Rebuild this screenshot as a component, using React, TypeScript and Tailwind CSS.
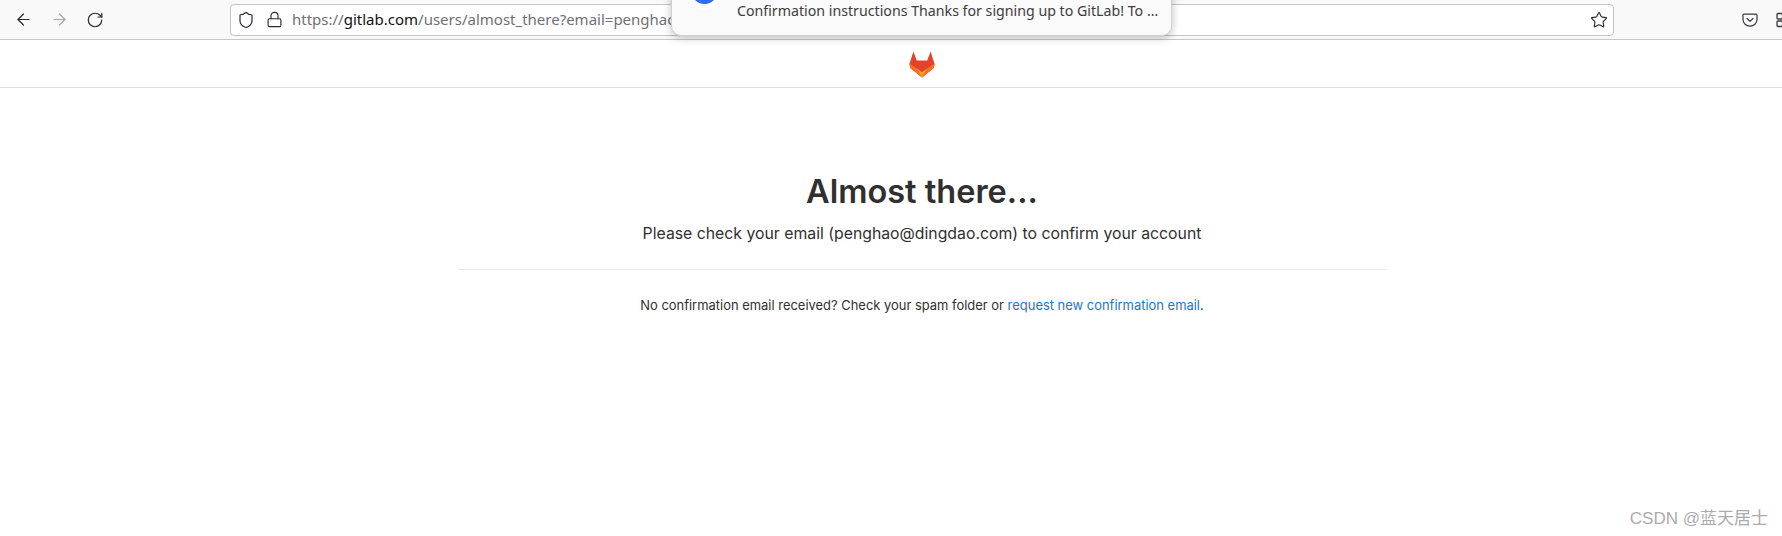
import React from "react";
import { ArrowLeft, ArrowRight, Lock, RotateCw, Shield, Star } from "lucide-react";

const GitlabLogo = () => (
  <svg width="26" height="27" viewBox="0 0 26 27" className="block">
    <path d="M4.4 0.5 L0.4 13 L1.4 17 L13 26.5 L24.6 17 L25.6 13 L21.6 0.5 L18.2 9.5 L7.8 9.5 Z" fill="#e24329" />
    <path d="M0.4 12.5 L8 17.6 L13 26.5 L1.2 17 Z" fill="#fc6d26" />
    <path d="M25.6 12.5 L18 17.6 L13 26.5 L24.8 17 Z" fill="#fc6d26" />
    <path d="M8 17.6 L13 21.2 L18 17.6 L13 26.5 Z" fill="#fca326" />
  </svg>
);

const PocketIcon = () => (
  <svg width="16" height="16" viewBox="0 0 16 16" fill="none" stroke="#3a3a40" strokeWidth="1.2" className="block">
    <path d="M2 2.2h12a1 1 0 0 1 1 1v4.3c0 3.8-3.1 6.6-7 6.6s-7-2.8-7-6.6V3.2a1 1 0 0 1 1-1z" />
    <path d="M5 6.5 8 9.4l3-2.9" strokeLinecap="round" strokeLinejoin="round" />
  </svg>
);

const ExtensionsIcon = () => (
  <svg width="16" height="16" viewBox="0 0 16 16" fill="none" stroke="#3a3a40" strokeWidth="1.3" className="block shrink-0">
    <rect x="1" y="1.5" width="5.5" height="5.5" rx="1" />
    <rect x="1" y="9" width="5.5" height="5.5" rx="1" />
    <rect x="9" y="9" width="5.5" height="5.5" rx="1" />
  </svg>
);

const App = () => {
  return (
    <div className="relative h-[536px] w-[1782px] overflow-hidden bg-white font-['Inter',sans-serif] text-[#303030]">
      {/* browser toolbar */}
      <div className="flex h-10 items-center border-b border-[#c8c8ca] bg-[#f9f9f9]">
        <div className="flex w-[230px] items-center gap-[17px] pl-[14px] text-[#2b2a33]">
          <ArrowLeft size={19} strokeWidth={1.5} />
          <ArrowRight size={19} strokeWidth={1.5} className="text-[#a5a5ab]" />
          <RotateCw size={18} strokeWidth={1.6} />
        </div>
        <div className="flex h-8 w-[1384px] items-center rounded border border-[#c4c4c8] bg-white pl-[6px] pr-[5px]">
          <Shield size={18} strokeWidth={1.6} className="text-[#2b2a33]" />
          <Lock size={17} strokeWidth={1.6} className="ml-[11px] text-[#2b2a33]" />
          <div className="ml-[9px] flex-1 overflow-hidden whitespace-nowrap font-['Noto_Sans',sans-serif] text-[15px] text-[#6f6f76]">
            https://<span className="text-[#111]">gitlab.com</span>/users/almost_there?email=penghao
          </div>
          <Star size={18} strokeWidth={1.5} className="text-[#2b2a33]" />
        </div>
        <div className="ml-auto flex items-center gap-[18px]">
          <PocketIcon />
          <div className="w-[6px] overflow-hidden">
            <ExtensionsIcon />
          </div>
        </div>
      </div>

      {/* page header */}
      <div className="flex h-[48px] items-center justify-center border-b border-[#dcdcde] pl-[62px] pt-px">
        <GitlabLogo />
      </div>

      {/* confirmation message */}
      <div className="flex flex-col items-center pl-[62px] pt-[80px]">
        <div className="flex w-[929px] flex-col items-center">
          <h1 className="text-[32.5px] leading-[48px] font-semibold text-[#303030]">Almost there...</h1>
          <p className="mt-[6px] text-[15.8px] leading-6 text-[#303030]">
            Please check your email (penghao@dingdao.com) to confirm your account
          </p>
          <div className="mt-[23px] w-full border-t border-[#e8e8ea]" />
          <p className="mt-[26px] text-[12.95px] leading-[18px] text-[#303030]">
            No confirmation email received? Check your spam folder or{" "}
            <a className="text-[#1f75cb]">request new confirmation email</a>.
          </p>
        </div>
      </div>

      {/* desktop notification */}
      <div className="absolute top-[-20px] left-[671px] flex h-[56px] w-[501px] rounded-b-[10px] border border-[#d0d0d0] bg-[#fafafa] shadow-[0_2px_8px_rgba(0,0,0,0.25)]">
        <div className="absolute top-[-4px] left-[19px] h-[27px] w-[27px] rounded-full bg-[#2b6ef2] ring-[5px] ring-white" />
        <div className="mt-[20px] ml-[65px] font-['Noto_Sans',sans-serif] text-[14.2px] leading-5 whitespace-nowrap text-[#3d3d3d]">
          Confirmation instructions Thanks for signing up to GitLab! To …
        </div>
      </div>

      {/* watermark */}
      <div className="absolute right-[14px] bottom-[7px] font-['Liberation_Sans','Noto_Sans_CJK_SC',sans-serif] text-[17px] leading-5 text-[#ababab]">
        CSDN @蓝天居士
      </div>
    </div>
  );
};

export default App;
